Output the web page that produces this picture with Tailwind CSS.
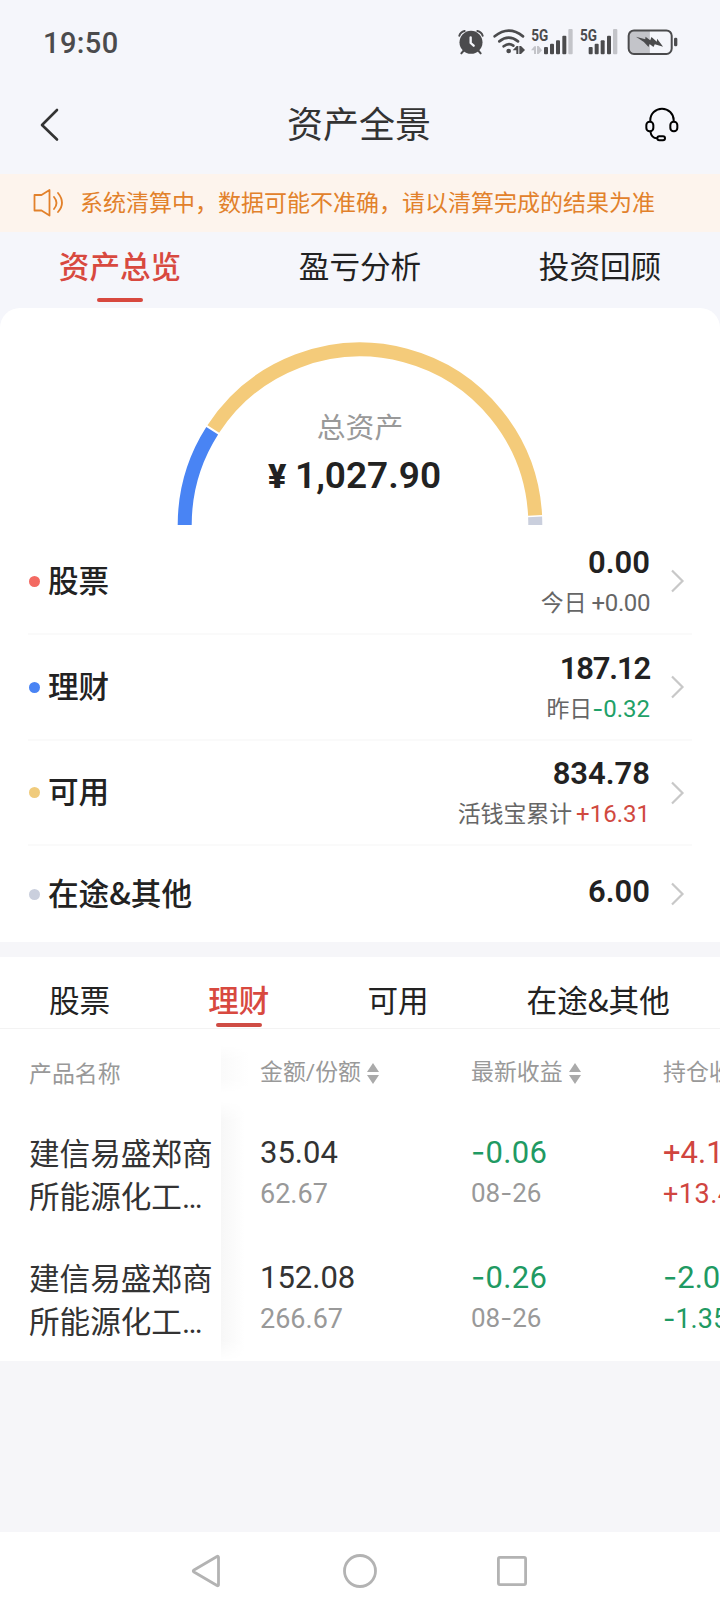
<!DOCTYPE html>
<html lang="zh-CN">
<head>
    <meta charset="UTF-8">
    <meta name="viewport" content="width=device-width, initial-scale=1.0">
    <title>资产全景</title>
    <script src="https://cdn.jsdelivr.net/npm/@tailwindcss/browser@4"></script>
</head>
<body class="w-[720px] h-[1610px] flex flex-col overflow-hidden bg-[#f6f6f9] text-[#222] font-['Noto_Sans_CJK_SC',sans-serif]">

    <!-- Status bar -->
    <div class="h-[84px] bg-[#f5f6fb] flex items-center justify-between pl-[43px] pr-[42px] shrink-0">
        <span class="font-['Roboto'] font-medium text-[29px] leading-8 tracking-[0.4px] text-[#4b4b4d] pt-[2px]">19:50</span>
        <div class="flex text-[#4b4b4d]">
            <svg class="w-[26px] h-7 mr-[9px]" viewBox="56 54 78 84" fill="none" stroke="currentColor">
                <circle cx="95" cy="97" r="34.500" fill="currentColor" stroke="none"/>
                <path d="M60 77Q63 66 76 63M130 77Q127 66 114 63" stroke-width="6" stroke-linecap="round"/>
                <path d="M72 123l-6 7M118 123l6 7" stroke-width="6" stroke-linecap="round"/>
                <path d="M94 82v17l9 8" stroke="#f5f6fb" stroke-width="7" stroke-linecap="round" stroke-linejoin="round"/>
            </svg>
            <svg class="w-8 h-7 mr-[6px]" viewBox="160 54 96 84" fill="none" stroke="currentColor">
                <path d="M165 79Q207 45 250 79" stroke-width="8" stroke-linecap="round"/>
                <path d="M179 94Q207 72 235 94" stroke-width="8" stroke-linecap="round"/>
                <path d="M192 109Q207 97 221 107" stroke-width="8" stroke-linecap="round"/>
                <circle cx="207" cy="123" r="7" fill="currentColor" stroke="none"/>
                <path d="M219 121l12-13h5v24h-6v-11zM256 120l-12 12h-5v-24h5z" fill="currentColor" stroke="none"/>
            </svg>
            <svg class="w-[42px] h-7 mr-[7px]" viewBox="276 54 126 84" fill="currentColor">
                <text x="277" y="94" class="font-['Roboto'] font-bold" font-size="48" textLength="51" lengthAdjust="spacingAndGlyphs">5G</text>
                <path d="M276 121l10-12h5v23h-6v-11zM309 121l-10 11h-5v-24h5z" fill="#c3c4c9"/>
                <rect x="315" y="111" width="12" height="22" rx="3"/>
                <rect x="333" y="101" width="12" height="32" rx="3"/>
                <rect x="351" y="91" width="12" height="42" rx="3"/>
                <rect x="370" y="77" width="12" height="56" rx="3"/>
                <rect x="388" y="57" width="13" height="76" rx="3" fill="#c3c4c9"/>
            </svg>
            <svg class="w-[38px] h-7 mr-[9px]" viewBox="424 54 114 84" fill="currentColor">
                <text x="424" y="94" class="font-['Roboto'] font-bold" font-size="48" textLength="51" lengthAdjust="spacingAndGlyphs">5G</text>
                <rect x="450" y="111" width="12" height="22" rx="3"/>
                <rect x="468" y="101" width="12" height="32" rx="3"/>
                <rect x="486" y="91" width="12" height="42" rx="3"/>
                <rect x="505" y="77" width="12" height="56" rx="3"/>
                <rect x="523" y="57" width="13" height="76" rx="3" fill="#c3c4c9"/>
            </svg>
            <svg class="w-[51px] h-7" viewBox="564 54 154 84" fill="currentColor">
                <path d="M584 61h49v71h-49q-14 0-14-14v-43q0-14 14-14z" fill="#c3c4c9"/>
                <rect x="569" y="61" width="130" height="71" rx="16" fill="none" stroke="currentColor" stroke-width="6"/>
                <rect x="706" y="83" width="10" height="26" rx="4"/>
                <path d="M591 80l28 8 1-8 14 11 4-10 16 14 1-9 18 24-25-7-4 8-12-9-3 9-14-15z"/>
            </svg>
        </div>
    </div>

    <!-- Title bar -->
    <div class="h-[90px] bg-[#f5f6fb] flex items-center justify-between pl-[39px] pr-[41px] pb-[11px] shrink-0">
        <svg class="w-5 h-9" viewBox="0 0 20 36" fill="none" stroke="#333" stroke-width="2.600" stroke-linecap="round" stroke-linejoin="round"><path d="M18 4L3 19l15 14.500"/></svg>
        <h1 class="text-[36px] leading-[44px] text-[#333] ml-[14px] pb-1">资产全景</h1>
        <svg class="w-[34px] h-[36px]" viewBox="616 289 102 108" fill="none" stroke="#000" stroke-width="6">
            <path d="M632 337v-6a35 34 0 0 1 70 0v6"/>
            <rect x="620" y="336" width="21" height="29" rx="10"/>
            <rect x="692" y="336" width="21" height="29" rx="10"/>
            <path d="M632 365q3 20 20 21"/>
            <rect x="653" y="380" width="23" height="12" rx="6"/>
        </svg>
    </div>

    <!-- Notice -->
    <div class="h-[58px] bg-[#fdf4ed] text-[#e2812b] flex items-center pl-[33px] shrink-0">
        <svg class="w-[31px] h-[28px] mr-4" viewBox="0 0 31 28" fill="none" stroke="currentColor" stroke-width="1.800" stroke-linejoin="round" stroke-linecap="round">
            <path d="M1.500 6h7l8-5v25.500l-8-5h-7zM21 8q5 6 0 12M25 4q8 10 0 19"/>
        </svg>
        <span class="text-[23px] leading-8 whitespace-nowrap pb-1">系统清算中，数据可能不准确，请以清算完成的结果为准</span>
    </div>

    <!-- Main tabs -->
    <div class="h-[76px] bg-[#f5f6fb] grid grid-cols-3 text-[30.600px] leading-[40px] shrink-0">
        <div class="flex flex-col items-center pt-[13px] text-[#d8493f] font-medium">资产总览<i class="w-[46px] h-1 mt-[13px] rounded-full bg-[#d8493f]"></i></div>
        <div class="flex flex-col items-center pt-[13px]">盈亏分析</div>
        <div class="flex flex-col items-center pt-[13px]">投资回顾</div>
    </div>

    <!-- Overview card -->
    <div class="bg-[#f5f6fb] shrink-0">
        <div class="h-[634px] bg-white rounded-t-[20px]">
            <div class="relative h-[221px]">
                <svg class="w-[720px] h-[221px]" viewBox="0 308 720 221" fill="none" stroke-width="14">
                    <path d="M184.700 525A175.300 175.300 0 0 1 212.200 430.700" stroke="#4984f4"/>
                    <path d="M213.300 429A175.300 175.300 0 0 1 535.100 515.300" stroke="#f4cb7a"/>
                    <path d="M535.100 516.800A175.300 175.300 0 0 1 535.300 525" stroke="#cacfdd"/>
                </svg>
                <div class="absolute inset-x-0 top-[98px] text-center text-[28.800px] leading-10 text-[#999]">总资产</div>
                <div class="absolute left-[268px] top-[146px] flex items-baseline font-['Roboto'] font-semibold leading-[44px]">
                    <span class="text-[34px] w-[27px] font-black">¥</span><span class="text-[37px]">1,027.90</span>
                </div>
            </div>

            <div class="mx-7 h-[106px] border-b-2 border-[#fafafa] flex items-center">
                <i class="w-[11px] h-[11px] ml-px mr-2 rounded-full bg-[#f36a62]"></i>
                <span class="text-[30.600px] leading-10 font-medium flex-1 pb-[5px]">股票</span>
                <div class="flex flex-col items-end pt-px">
                    <b class="font-['Roboto'] font-semibold text-[31px] leading-10">0.00</b>
                    <span class="text-[22.900px] leading-9 text-[#666] flex items-baseline gap-[5px]">今日<span class="font-['Roboto'] text-2xl leading-9 tracking-[-0.4px]">+0.00</span></span>
                </div>
                <svg class="w-4 h-6 ml-[19px] mr-[7px]" viewBox="0 0 16 24" fill="none" stroke="#c8c8c8" stroke-width="2.200"><path d="M3 1.500L13.500 12 3 22.500"/></svg>
            </div>
            <div class="mx-7 h-[106px] border-b-2 border-[#fafafa] flex items-center">
                <i class="w-[11px] h-[11px] ml-px mr-2 rounded-full bg-[#4984f4]"></i>
                <span class="text-[30.600px] leading-10 font-medium flex-1 pb-[5px]">理财</span>
                <div class="flex flex-col items-end pt-px">
                    <b class="font-['Roboto'] font-semibold text-[31px] leading-10 tracking-[-1.2px]">187.12</b>
                    <span class="text-[22.900px] leading-9 text-[#666] flex items-baseline">昨日<span class="font-['Roboto'] text-2xl leading-9 text-[#1fa168]"><span class="font-['Inter'] leading-none">-</span>0.32</span></span>
                </div>
                <svg class="w-4 h-6 ml-[19px] mr-[7px]" viewBox="0 0 16 24" fill="none" stroke="#c8c8c8" stroke-width="2.200"><path d="M3 1.500L13.500 12 3 22.500"/></svg>
            </div>
            <div class="mx-7 h-[105px] border-b-2 border-[#fafafa] flex items-center">
                <i class="w-[11px] h-[11px] ml-px mr-2 rounded-full bg-[#f0cb7c]"></i>
                <span class="text-[30.600px] leading-10 font-medium flex-1 pb-[5px]">可用</span>
                <div class="flex flex-col items-end">
                    <b class="font-['Roboto'] font-semibold text-[31px] leading-10">834.78</b>
                    <span class="text-[22.900px] leading-9 text-[#666] flex items-baseline gap-[4px]">活钱宝累计<span class="font-['Roboto'] text-2xl leading-9 text-[#d0493f]">+16.31</span></span>
                </div>
                <svg class="w-4 h-6 ml-[19px] mr-[7px]" viewBox="0 0 16 24" fill="none" stroke="#c8c8c8" stroke-width="2.200"><path d="M3 1.500L13.500 12 3 22.500"/></svg>
            </div>
            <div class="mx-7 h-[96px] flex items-center">
                <i class="w-[11px] h-[11px] ml-px mr-2 rounded-full bg-[#cacfdd]"></i>
                <span class="text-[30.600px] leading-10 font-medium flex-1 pb-[5px]">在途&amp;其他</span>
                <b class="font-['Roboto'] font-semibold text-[31px] leading-10 pb-1">6.00</b>
                <svg class="w-4 h-6 ml-[19px] mr-[7px]" viewBox="0 0 16 24" fill="none" stroke="#c8c8c8" stroke-width="2.200"><path d="M3 1.500L13.500 12 3 22.500"/></svg>
            </div>
        </div>
    </div>

    <!-- Holdings -->
    <div class="mt-[15px] h-[404px] bg-white shrink-0">
        <div class="h-[72px] border-b border-[#f3f3f3] flex gap-[98px] pl-[49px] pt-[22px] text-[30.600px] leading-10 whitespace-nowrap">
            <div>股票</div>
            <div class="flex flex-col items-center text-[#d8493f] font-medium">理财<i class="w-[46px] h-1 mt-1 rounded-full bg-[#cf4c44]"></i></div>
            <div>可用</div>
            <div>在途&amp;其他</div>
        </div>

        <div class="flex h-[332px]">
            <!-- fixed first column -->
            <div class="w-[221px] pl-[29px] shrink-0">
                <div class="h-[88px] flex items-center text-[22.900px] leading-8 text-[#999] pb-[3px]">产品名称</div>
                <div class="h-[125px] pt-[14px] text-[30.600px] leading-[43px] text-[#333] whitespace-nowrap">建信易盛郑商<br>所能源化工<span class="font-['Roboto']">…</span></div>
                <div class="h-[119px] pt-[14px] text-[30.600px] leading-[43px] text-[#333] whitespace-nowrap">建信易盛郑商<br>所能源化工<span class="font-['Roboto']">…</span></div>
            </div>
            <div class="w-[28px] shrink-0 pt-4">
                <div class="h-[48px] bg-linear-to-r from-[#fafafa] to-white mask-y-from-70%"></div>
                <div class="h-[260px] mt-2 bg-linear-to-r from-[#f7f7f7] to-white to-85% mask-y-from-92%"></div>
            </div>
            <!-- scrollable columns -->
            <div class="flex-1 pl-[11px] overflow-hidden">
                <div class="w-[600px] grid grid-cols-[211px_192px_197px] text-[31px] leading-10 font-['Roboto','Noto_Sans_CJK_SC',sans-serif]">
                    <div class="h-[88px] flex items-center text-[22.900px] text-[#999]">金额/份额<svg class="w-3 h-[21px] ml-[6px]" viewBox="0 0 12 21" fill="#aaa"><path d="M6 0l6 9H0zM6 21l6-9H0z"/></svg></div>
                    <div class="h-[88px] flex items-center text-[22.900px] text-[#999]">最新收益<svg class="w-3 h-[21px] ml-[6px]" viewBox="0 0 12 21" fill="#aaa"><path d="M6 0l6 9H0zM6 21l6-9H0z"/></svg></div>
                    <div class="h-[88px] flex items-center text-[22.900px] text-[#999]">持仓收益</div>

                    <div class="h-[125px] pt-4 text-[#333]">35.04<p class="text-[27px] text-[#999] pt-px">62.67</p></div>
                    <div class="h-[125px] pt-4 text-[#1f9a63] tracking-[0.3px]"><span class="font-['Inter'] leading-none">-</span>0.06<p class="text-[26px] text-[#999] tracking-normal">08<span class="font-['Inter'] leading-none">-</span>26</p></div>
                    <div class="h-[125px] pt-4 text-[#d0453f]">+4.12<p class="text-[27px] tracking-[0.5px] pt-px">+13.42%</p></div>

                    <div class="h-[119px] pt-4 text-[#333]">152.08<p class="text-[27px] text-[#999] pt-px">266.67</p></div>
                    <div class="h-[119px] pt-4 text-[#1f9a63] tracking-[0.3px]"><span class="font-['Inter'] leading-none">-</span>0.26<p class="text-[26px] text-[#999] tracking-normal">08<span class="font-['Inter'] leading-none">-</span>26</p></div>
                    <div class="h-[119px] pt-4 text-[#1f9a63]"><span class="font-['Inter'] leading-none">-</span>2.08<p class="text-[27px] pt-px"><span class="font-['Inter'] leading-none">-</span>1.35%</p></div>
                </div>
            </div>
        </div>
    </div>

    <!-- System navigation -->
    <div class="mt-auto h-[78px] bg-white flex items-center justify-between pl-[190px] pr-[192px] shrink-0">
        <svg class="w-8 h-9" viewBox="0 0 32 36" fill="none" stroke="#b3b3b3" stroke-width="2.800" stroke-linejoin="round"><path d="M27 3.500q1.500-.8 1.500 1v27q0 1.800-1.500 1L4 19q-1.500-1 0-2z"/></svg>
        <svg class="w-9 h-9 ml-px" viewBox="0 0 36 36" fill="none" stroke="#b3b3b3" stroke-width="2.800"><circle cx="18" cy="18" r="15.500"/></svg>
        <svg class="w-8 h-8" viewBox="0 0 32 32" fill="none" stroke="#b3b3b3" stroke-width="2.800"><rect x="2.400" y="2.400" width="27.200" height="27.200" rx="1.500"/></svg>
    </div>
</body>
</html>
